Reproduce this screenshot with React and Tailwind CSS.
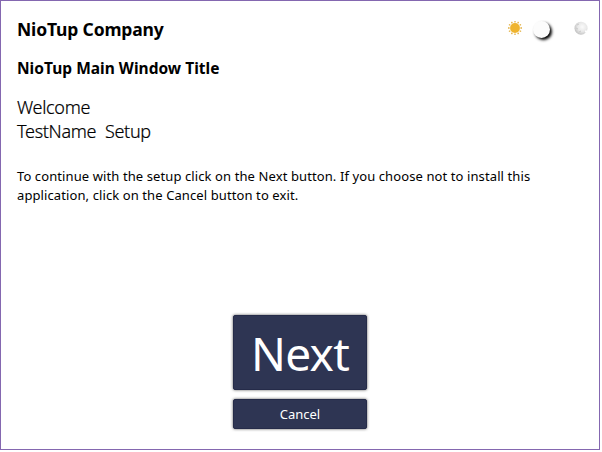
const RAYS = [0, 30, 60, 90, 120, 150, 180, 210, 240, 270, 300, 330];

function SunIcon() {
  return (
    <svg className="h-4 w-4" viewBox="0 0 16 16">
      <circle cx="8" cy="8" r="4.9" fill="#efb42f" />
      {RAYS.map((a) => (
        <path key={a} d="M8 2.6V1" stroke="#e3b040" strokeWidth="1.3" transform={`rotate(${a} 8 8)`} />
      ))}
    </svg>
  );
}

function MoonIcon() {
  return (
    <svg className="h-4 w-4" viewBox="0 0 16 16">
      <defs>
        <radialGradient id="moon" cx="0.6" cy="0.4" r="0.6">
          <stop offset="0" stopColor="#fafafa" />
          <stop offset="0.6" stopColor="#e8e8e8" />
          <stop offset="1" stopColor="#c6c6c6" />
        </radialGradient>
      </defs>
      <circle cx="8" cy="8.2" r="6.5" fill="url(#moon)" />
      <path d="M4 5l2-1M3 8l2 1M6 12l2-1" stroke="#cacaca" strokeWidth="1" />
      <path d="M12 10.5h2.5v2H12z" fill="#fff" />
    </svg>
  );
}

export default function App() {
  return (
    <div className="h-[452px] w-[602px] bg-white">
      <main className="flex h-[450px] w-[600px] flex-col border border-[#8467b0] bg-white pl-4 font-['Noto_Sans',sans-serif] text-black">
        <header className="flex h-[55px] items-start">
          <h1 className="w-[490px] pt-[14px] text-[17.5px] leading-7 font-bold tracking-[-0.15px]">
            <span>NioTup Company</span>
          </h1>
          <div className="flex pt-[19px]">
            <SunIcon />
            <div className="mt-[1px] ml-[10px] h-[17px] w-[17px] rounded-full bg-[#fcfcfc] shadow-[2px_2px_3px_#000]" />
            <div className="ml-[23px]">
              <MoonIcon />
            </div>
          </div>
        </header>
        <h2 className="h-[39px] text-[15.5px] leading-6 font-bold tracking-[0.02px]">
          <span>NioTup Main Window Title</span>
        </h2>
        <div className="h-[72px] text-[18px] leading-6 font-light tracking-[-0.3px] [-webkit-text-stroke:0.2px_#000]">
          <p>
            <span>Welcome</span>
          </p>
          <p className="whitespace-pre">
            <span>TestName  Setup</span>
          </p>
        </div>
        <div className="h-[148px] text-[13px] leading-[19px] tracking-[0.1px] whitespace-nowrap">
          <p>
            <span>To continue with the setup click on the Next button. If you choose not to install this</span>
          </p>
          <p>
            <span>application, click on the Cancel button to exit.</span>
          </p>
        </div>
        <div className="ml-[216px] flex w-[134px] flex-col gap-[9px] text-white">
          <button className="h-[75px] rounded-[2px] border border-[#252b49] bg-[#2e3553] pt-px text-[46px] leading-[73px] tracking-[-0.7px] shadow-[0_0_3px_#555]">
            Next
          </button>
          <button className="h-[30px] rounded-[2px] border border-[#252b49] bg-[#2e3553] text-[13px] leading-[26px] tracking-[0px] shadow-[0_0_3px_#555]">
            Cancel
          </button>
        </div>
      </main>
    </div>
  );
}
